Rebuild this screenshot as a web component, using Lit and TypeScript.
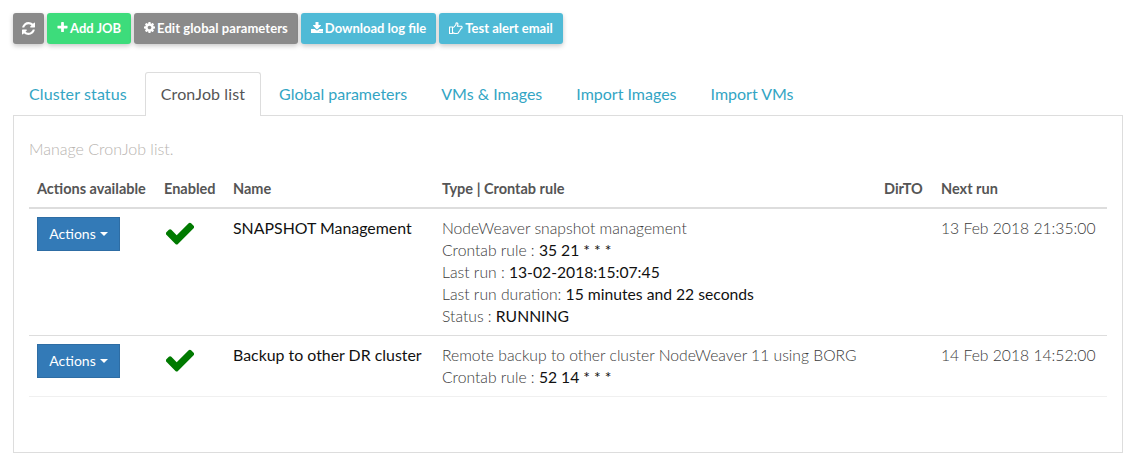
import { LitElement, html, css } from "lit";
import { customElement } from "lit/decorators.js";

const icon = (d: string, cls = "") =>
  html`<svg class="ic ${cls}" viewBox="128 128 1536 1536" aria-hidden="true"><path d=${d} fill="currentColor"></path></svg>`;

const REFRESH = "M1639 1056q0 5-1 7-64 268-268 434.500t-478 166.500q-146 0-282.500-55t-243.500-157l-129 129q-19 19-45 19t-45-19-19-45v-448q0-26 19-45t45-19h448q26 0 45 19t19 45-19 45l-137 137q71 66 161 102t187 36q134 0 250-65t186-179q11-17 53-117 8-23 30-23h192q13 0 22.500 9.500t9.500 22.500zm25-800v448q0 26-19 45t-45 19h-448q-26 0-45-19t-19-45 19-45l138-138q-148-137-349-137-134 0-250 65t-186 179q-11 17-53 117-8 23-30 23h-199q-13 0-22.500-9.500t-9.500-22.500v-7q65-268 270-434.500t480-166.500q146 0 284 55.500t245 156.500l130-129q19-19 45-19t45 19 19 45z";
const PLUS = "M1600 736v192q0 40-28 68t-68 28h-416v416q0 40-28 68t-68 28h-192q-40 0-68-28t-28-68v-416h-416q-40 0-68-28t-28-68v-192q0-40 28-68t68-28h416v-416q0-40 28-68t68-28h192q40 0 68 28t28 68v416h416q40 0 68 28t28 68z";
const GEAR = "M1152 896q0-106-75-181t-181-75-181 75-75 181 75 181 181 75 181-75 75-181zm512-109v222q0 12-8 23t-20 13l-185 28q-19 54-39 91 35 50 107 138 10 12 10 25t-9 23q-27 37-99 108t-94 71q-12 0-26-9l-138-108q-44 23-91 38-16 136-29 186-7 28-36 28h-222q-14 0-24.500-8.500t-11.500-21.500l-28-184q-49-16-90-37l-141 107q-10 9-25 9-14 0-25-11-126-114-165-168-7-10-7-23 0-12 8-23 15-21 51-66.500t54-70.500q-27-50-41-99l-183-27q-13-2-21-12.500t-8-23.500v-222q0-12 8-23t19-13l186-28q14-46 39-92-40-57-107-138-10-12-10-24 0-10 9-23 26-36 98.500-107.500t94.500-71.500q13 0 26 10l138 107q44-23 91-38 16-136 29-186 7-28 36-28h222q14 0 24.500 8.500t11.500 21.500l28 184q49 16 90 37l142-107q9-9 24-9 13 0 25 10 129 119 165 170 7 8 7 22 0 12-8 23-15 21-51 66.500t-54 70.500q26 50 41 98l183 28q13 2 21 12.500t8 23.500z";
const DOWNLOAD = "M1344 1344q0-26-19-45t-45-19-45 19-19 45 19 45 45 19 45-19 19-45zm256 0q0-26-19-45t-45-19-45 19-19 45 19 45 45 19 45-19 19-45zm128-224v320q0 40-28 68t-68 28h-1472q-40 0-68-28t-28-68v-320q0-40 28-68t68-28h465l135 136q58 56 136 56t136-56l136-136h464q40 0 68 28t28 68zm-325-569q17 41-14 70l-448 448q-18 19-45 19t-45-19l-448-448q-31-29-14-70 17-39 59-39h256v-448q0-26 19-45t45-19h256q26 0 45 19t19 45v448h256q42 0 59 39z";
const CHECK = "M1671 566q0 40-28 68l-724 724-136 136q-28 28-68 28t-68-28l-136-136-362-362q-28-28-28-68t28-68l136-136q28-28 68-28t68 28l294 295 656-657q28-28 68-28t68 28l136 136q28 28 28 68z";

const hand = html`<svg class="hand" viewBox="0 0 14 12" aria-hidden="true">
  <path d="M.5 5h3v6.500h-3zM3.500 5.500 5 5 7 2.500V1.200Q7.800.4 8.800 1.500 9.200 2.800 8.300 4.200H12.400Q13.700 5 12.700 6.300H11.900Q12 7.600 11 8Q11 9.200 10 9.500 9.800 11.500 7.500 11.500H6Q4.500 11.300 3.500 10.500"
    fill="none" stroke="currentColor" stroke-width="1.100" stroke-linejoin="round"></path></svg>`;

const TABS = ["Cluster status", "CronJob list", "Global parameters", "VMs & Images", "Import Images", "Import VMs"];

@customElement("app-root")
export class AppRoot extends LitElement {
  static styles = css`
    :host {
      display: block;
      font-family: Lato, "Liberation Sans", sans-serif;
      font-size: 16px;
      line-height: 22px;
      color: #555;
      background: #fff;
      height: 469px;
      box-sizing: border-box;
      padding: 13px 15px 0 13px;
      overflow: hidden;
    }
    * { box-sizing: border-box; }
    .ic { width: 11px; height: 11px; display: block; flex: none; }
    .ic.wide { width: 12px; height: 12px; }
    .ic.big { width: 13px; height: 13px; }
    .hand { width: 14px; height: 12px; display: block; flex: none; }
    .toolbar { display: flex; gap: 3px; height: 31px; }
    .btn {
      display: inline-flex; align-items: center; gap: 2px;
      height: 31px; padding: 0 10px 2px;
      border-radius: 3px;
      font-size: 13px; font-weight: 700; color: #fff;
      box-shadow: 0 2px 5px rgba(0,0,0,.22);
      white-space: nowrap;
    }
    .btn.solo { padding: 0 9px; }
    .btn.edit { letter-spacing: .07px; }
    .grey { background: #8a8a8a; }
    .green { background: #3ddc7b; }
    .blue { background: #4fbad6; }
    .tabs { display: flex; margin-top: 28px; height: 44px; position: relative; z-index: 1; }
    .tab {
      padding: 10px 15px 11px; margin-right: 2px;
      border: 1px solid transparent; border-bottom: none;
      color: #33a5c4; font-weight: 400;
      white-space: nowrap;
    }
    .tab.t0 { letter-spacing: .12px; }
    .tab.t1 { letter-spacing: .1px; }
    .tab.active {
      color: #555; background: #fff;
      border-color: #ddd; border-radius: 3px 3px 0 0;
      height: 44px;
    }
    .panel {
      border: 1px solid #ddd; margin-top: -1px;
      height: 338px; padding: 22px 15px 0;
    }
    .intro { color: #b8b4b0; font-weight: 300; height: 22px; }
    table { border-collapse: collapse; table-layout: fixed; width: 1078px; margin-top: 9px; }
    col.c1 { width: 127px; }
    col.c2 { width: 69px; }
    col.c3 { width: 209px; }
    col.c4 { width: 442px; }
    col.c5 { width: 57px; }
    col.c6 { width: 174px; }
    th {
      text-align: left; font-weight: 700; font-size: 14.5px; color: #555;
      padding: 9px 8px 7px; height: 38px; line-height: 22px;
      border-bottom: 2px solid #ddd; white-space: nowrap;
    }
    td { vertical-align: top; padding: 8px; font-weight: 300; font-size: 15.7px; color: #3a3a3a; white-space: nowrap; }
    tr.r1 td { border-bottom: 1px solid #ddd; }
    tr.r2 td { border-bottom: 1px solid #f0f0f0; }
    .dd {
      display: flex; align-items: center; justify-content: center; gap: 4px;
      width: 83px; height: 34px;
      background: #337ab7; border: 1px solid #2e6da4; color: #fff;
      font-size: 14px; font-weight: 400;
    }
    .caret { width: 0; height: 0; border-top: 4px solid #fff; border-left: 4px solid transparent; border-right: 4px solid transparent; }
    .chk { color: #007a00; display: block; margin: 2px 0 0 2px; }
    .chk .ic { width: 28px; height: 28px; }
    td.name { color: #111; font-weight: 400; font-size: 15.9px; }
    b { font-weight: 400; color: #111; }
  `;

  render() {
    const actions = html`<span class="dd">Actions<span class="caret"></span></span>`;
    const chk = html`<span class="chk">${icon(CHECK)}</span>`;
    return html`
      <div class="toolbar">
        <span class="btn grey solo">${icon(REFRESH, "big")}</span>
        <span class="btn green">${icon(PLUS)}Add JOB</span>
        <span class="btn grey edit">${icon(GEAR)}Edit global parameters</span>
        <span class="btn blue">${icon(DOWNLOAD, "wide")}Download log file</span>
        <span class="btn blue">${hand}Test alert email</span>
      </div>
      <div class="tabs">
        ${TABS.map((t, i) => html`<div class="tab t${i} ${i === 1 ? "active" : ""}">${t}</div>`)}
      </div>
      <div class="panel">
        <div class="intro">Manage CronJob list.</div>
        <table>
          <colgroup>
            <col class="c1" /><col class="c2" /><col class="c3" /><col class="c4" /><col class="c5" /><col class="c6" />
          </colgroup>
          <thead>
            <tr><th>Actions available</th><th>Enabled</th><th>Name</th><th>Type | Crontab rule</th><th>DirTO</th><th>Next run</th></tr>
          </thead>
          <tbody>
            <tr class="r1">
              <td>${actions}</td>
              <td>${chk}</td>
              <td class="name">SNAPSHOT Management</td>
              <td>NodeWeaver snapshot management<br />Crontab rule : <b>35 21 * * *</b><br />Last run : <b>13-02-2018:15:07:45</b><br />Last run duration: <b>15 minutes and 22 seconds</b><br />Status : <b>RUNNING</b></td>
              <td></td>
              <td>13 Feb 2018 21:35:00</td>
            </tr>
            <tr class="r2">
              <td>${actions}</td>
              <td>${chk}</td>
              <td class="name">Backup to other DR cluster</td>
              <td>Remote backup to other cluster NodeWeaver 11 using BORG<br />Crontab rule : <b>52 14 * * *</b></td>
              <td></td>
              <td>14 Feb 2018 14:52:00</td>
            </tr>
          </tbody>
        </table>
      </div>
    `;
  }
}
